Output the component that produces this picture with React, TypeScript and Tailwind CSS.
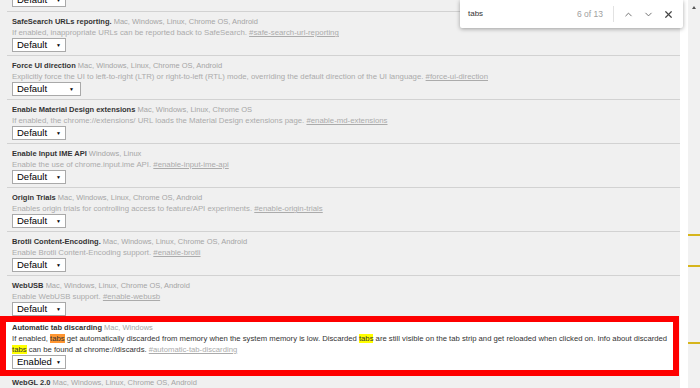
import { ChevronDown, ChevronUp, X } from "lucide-react";

type Flag = {
  title: string;
  platforms: string;
  desc: string;
  hash: string;
  wide?: boolean;
};

const flags: Flag[] = [
  {
    title: "SafeSearch URLs reporting.",
    platforms: "Mac, Windows, Linux, Chrome OS, Android",
    desc: "If enabled, inappropriate URLs can be reported back to SafeSearch.",
    hash: "#safe-search-url-reporting",
  },
  {
    title: "Force UI direction",
    platforms: "Mac, Windows, Linux, Chrome OS, Android",
    desc: "Explicitly force the UI to left-to-right (LTR) or right-to-left (RTL) mode, overriding the default direction of the UI language.",
    hash: "#force-ui-direction",
    wide: true,
  },
  {
    title: "Enable Material Design extensions",
    platforms: "Mac, Windows, Linux, Chrome OS",
    desc: "If enabled, the chrome://extensions/ URL loads the Material Design extensions page.",
    hash: "#enable-md-extensions",
  },
  {
    title: "Enable Input IME API",
    platforms: "Windows, Linux",
    desc: "Enable the use of chrome.input.ime API.",
    hash: "#enable-input-ime-api",
  },
  {
    title: "Origin Trials",
    platforms: "Mac, Windows, Linux, Chrome OS, Android",
    desc: "Enables origin trials for controlling access to feature/API experiments.",
    hash: "#enable-origin-trials",
  },
  {
    title: "Brotli Content-Encoding.",
    platforms: "Mac, Windows, Linux, Chrome OS, Android",
    desc: "Enable Brotli Content-Encoding support.",
    hash: "#enable-brotli",
  },
  {
    title: "WebUSB",
    platforms: "Mac, Windows, Linux, Chrome OS, Android",
    desc: "Enable WebUSB support.",
    hash: "#enable-webusb",
  },
];

function FakeSelect({ label, wide }: { label: string; wide?: boolean }) {
  return (
    <div
      className={
        wide
          ? "flex h-[14px] w-[69px] shrink-0 items-center justify-between border border-[#a9a9a9] bg-white pl-[4px] pr-[6px] text-[9.5px] leading-none text-black"
          : "flex h-[14px] w-[54px] shrink-0 items-center justify-between border border-[#a9a9a9] bg-white pl-[4px] pr-[4px] text-[9.5px] leading-none text-black"
      }
    >
      <span>{label}</span>
      <span className="text-[5px]">▼</span>
    </div>
  );
}

function FlagRow({ flag }: { flag: Flag }) {
  return (
    <div className="ml-[7px] border-t border-[#d2d2d2] pb-[3px] pl-[5px] pt-[4px]">
      <div className="h-[11px] whitespace-nowrap text-[7.5px] leading-[11px]">
        <span className="font-bold text-[#333]">{flag.title}</span>{" "}
        <span className="text-[#a5a5a5]">{flag.platforms}</span>
      </div>
      <div className="h-[11px] whitespace-nowrap text-[7.8px] leading-[11px] text-[#ababab]">
        {flag.desc} <span className="underline">{flag.hash}</span>
      </div>
      <FakeSelect label="Default" wide={flag.wide} />
    </div>
  );
}

function FindBar() {
  return (
    <div className="absolute left-[460px] top-0 flex h-[28px] w-[223px] items-center rounded-b-[2px] bg-white pl-[8px] pr-[9px] shadow-[0_1px_4px_rgba(0,0,0,0.35)]">
      <span className="flex-1 text-[8px] text-[#333]">tabs</span>
      <span className="mr-[10px] text-[8.5px] text-[#9e9e9e]">6 of 13</span>
      <span className="h-[16px] w-px bg-[#e2e2e2]" />
      <ChevronUp className="ml-[9px] h-[11px] w-[11px] text-[#666]" strokeWidth={2} />
      <ChevronDown className="ml-[9px] h-[11px] w-[11px] text-[#666]" strokeWidth={2} />
      <X className="ml-[9px] h-[11px] w-[11px] text-[#444]" strokeWidth={2.6} />
    </div>
  );
}

export default function App() {
  return (
    <div className="relative flex h-[388px] w-[700px] overflow-hidden bg-white font-['Liberation_Sans',Arial,sans-serif]">
      <main className="w-[680px] shrink-0 overflow-hidden bg-[#f0f0f0]">
        <div className="flex h-[7px] items-end overflow-hidden pl-[12px]">
          <FakeSelect label="Default" />
        </div>
        <div className="h-[4px]" />

        {flags.map((flag) => (
          <FlagRow key={flag.hash} flag={flag} />
        ))}

        {/* the matched experiment, boxed in red */}
        <div className="-mt-[3px] w-[679px] border-[6px] border-[#fe0000] bg-white pb-[1px] pl-[6px]">
          <div className="h-[11px] whitespace-nowrap text-[7.5px] leading-[11px]">
            <span className="font-bold text-[#333]">Automatic tab discarding</span>{" "}
            <span className="text-[#a5a5a5]">Mac, Windows</span>
          </div>
          <div className="whitespace-nowrap text-[7.7px] leading-[11px] text-[#333]">
            If enabled, <span className="bg-[#ff9632]">tabs</span> get automatically
            discarded from memory when the system memory is low. Discarded{" "}
            <span className="bg-[#ffff00]">tabs</span> are still visible on the tab
            strip and get reloaded when clicked on. Info about discarded
            <br />
            <span className="bg-[#ffff00]">tabs</span> can be found at
            chrome://discards.{" "}
            <span className="text-[#ababab] underline">#automatic-tab-discarding</span>
          </div>
          <FakeSelect label="Enabled" />
        </div>

        <div className="pl-[12px] pt-[1px]">
          <div className="h-[11px] whitespace-nowrap text-[7.5px] leading-[11px]">
            <span className="font-bold text-[#333]">WebGL 2.0</span>{" "}
            <span className="text-[#a5a5a5]">Mac, Windows, Linux, Chrome OS, Android</span>
          </div>
        </div>
      </main>

      <div className="w-[8px] shrink-0 bg-white" />

      <div className="relative w-[12px] shrink-0 bg-[#f1f1f1]">
        <div className="flex justify-center pt-[6px]">
          <div className="h-0 w-0 border-b-[3px] border-l-[2.5px] border-r-[2.5px] border-b-[#555] border-l-transparent border-r-transparent" />
        </div>
        <div className="absolute left-0 top-[234px] h-[2px] w-full bg-[#d6b51c]" />
        <div className="absolute left-0 top-[265px] h-[2px] w-full bg-[#d6b51c]" />
        <div className="absolute left-0 top-[342px] h-[2px] w-full bg-[#d6b51c]" />
      </div>

      <FindBar />
    </div>
  );
}
